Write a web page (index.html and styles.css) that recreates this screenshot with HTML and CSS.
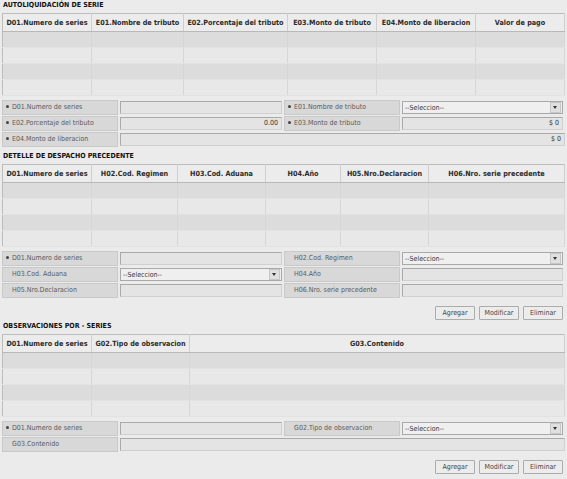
FILE: index.html
```html
<!DOCTYPE html>
<html lang="es">
<head>
  <meta charset="UTF-8">
  <title>Autoliquidación de serie</title>
  <link rel="stylesheet" href="styles.css">
</head>
<body>

  <!-- AUTOLIQUIDACION -->
  <div class="section-title">AUTOLIQUIDACIÓN DE SERIE</div>
  <table class="grid">
    <colgroup>
      <col style="width:89px"><col style="width:92px"><col style="width:104px">
      <col style="width:89px"><col style="width:99px"><col>
    </colgroup>
    <thead>
      <tr>
        <th>D01.Numero de series</th>
        <th>E01.Nombre de tributo</th>
        <th>E02.Porcentaje del tributo</th>
        <th>E03.Monto de tributo</th>
        <th>E04.Monto de liberacion</th>
        <th>Valor de pago</th>
      </tr>
    </thead>
    <tbody>
      <tr><td></td><td></td><td></td><td></td><td></td><td></td></tr>
      <tr><td></td><td></td><td></td><td></td><td></td><td></td></tr>
      <tr><td></td><td></td><td></td><td></td><td></td><td></td></tr>
      <tr><td></td><td></td><td></td><td></td><td></td><td></td></tr>
    </tbody>
  </table>

  <div class="form">
    <div class="lbl req">D01.Numero de series</div>
    <div class="fld"><div class="inp"></div></div>
    <div class="lbl req">E01.Nombre de tributo</div>
    <div class="fld"><div class="sel"><span>--Seleccion--</span><i class="arrow"></i></div></div>

    <div class="lbl req">E02.Porcentaje del tributo</div>
    <div class="fld"><div class="inp num">0.00</div></div>
    <div class="lbl req">E03.Monto de tributo</div>
    <div class="fld"><div class="inp num">$ 0</div></div>

    <div class="lbl req">E04.Monto de liberacion</div>
    <div class="fld wide"><div class="inp num">$ 0</div></div>
  </div>

  <!-- DESPACHO PRECEDENTE -->
  <div class="section-title">DETELLE DE DESPACHO PRECEDENTE</div>
  <table class="grid">
    <colgroup>
      <col style="width:89px"><col style="width:86px"><col style="width:88px">
      <col style="width:75px"><col style="width:88px"><col>
    </colgroup>
    <thead>
      <tr>
        <th>D01.Numero de series</th>
        <th>H02.Cod. Regimen</th>
        <th>H03.Cod. Aduana</th>
        <th>H04.Año</th>
        <th>H05.Nro.Declaracion</th>
        <th>H06.Nro. serie precedente</th>
      </tr>
    </thead>
    <tbody>
      <tr><td></td><td></td><td></td><td></td><td></td><td></td></tr>
      <tr><td></td><td></td><td></td><td></td><td></td><td></td></tr>
      <tr><td></td><td></td><td></td><td></td><td></td><td></td></tr>
      <tr><td></td><td></td><td></td><td></td><td></td><td></td></tr>
    </tbody>
  </table>

  <div class="form">
    <div class="lbl req">D01.Numero de series</div>
    <div class="fld"><div class="inp"></div></div>
    <div class="lbl">H02.Cod. Regimen</div>
    <div class="fld"><div class="sel"><span>--Seleccion--</span><i class="arrow"></i></div></div>

    <div class="lbl">H03.Cod. Aduana</div>
    <div class="fld"><div class="sel"><span>--Seleccion--</span><i class="arrow"></i></div></div>
    <div class="lbl">H04.Año</div>
    <div class="fld"><div class="inp"></div></div>

    <div class="lbl">H05.Nro.Declaracion</div>
    <div class="fld"><div class="inp"></div></div>
    <div class="lbl">H06.Nro. serie precedente</div>
    <div class="fld"><div class="inp"></div></div>
  </div>

  <div class="actions">
    <button class="btn">Agregar</button>
    <button class="btn">Modificar</button>
    <button class="btn">Eliminar</button>
  </div>

  <!-- OBSERVACIONES -->
  <div class="section-title">OBSERVACIONES POR - SERIES</div>
  <table class="grid">
    <colgroup>
      <col style="width:89px"><col style="width:98px"><col>
    </colgroup>
    <thead>
      <tr>
        <th>D01.Numero de series</th>
        <th>G02.Tipo de observacion</th>
        <th>G03.Contenido</th>
      </tr>
    </thead>
    <tbody>
      <tr><td></td><td></td><td></td></tr>
      <tr><td></td><td></td><td></td></tr>
      <tr><td></td><td></td><td></td></tr>
      <tr><td></td><td></td><td></td></tr>
    </tbody>
  </table>

  <div class="form">
    <div class="lbl req">D01.Numero de series</div>
    <div class="fld"><div class="inp"></div></div>
    <div class="lbl">G02.Tipo de observacion</div>
    <div class="fld"><div class="sel"><span>--Seleccion--</span><i class="arrow"></i></div></div>

    <div class="lbl">G03.Contenido</div>
    <div class="fld wide"><div class="inp"></div></div>
  </div>

  <div class="actions">
    <button class="btn">Agregar</button>
    <button class="btn">Modificar</button>
    <button class="btn">Eliminar</button>
  </div>

</body>
</html>
```

FILE: styles.css
```css
body {
  margin: 0;
  padding: 0 2px;
  background: #ebebeb;
  font-family: "DejaVu Sans Condensed", "DejaVu Sans", sans-serif;
  font-size: 7px;
  color: #333;
}

.section-title {
  height: 13px;
  line-height: 11px;
  padding-left: 1px;
  font-weight: bold;
  font-size: 7px;
  color: #111;
}

/* tablas de consulta */
table.grid {
  width: 100%;
  border-collapse: collapse;
  table-layout: fixed;
  border: 1px solid #bcbcbc;
}

table.grid th {
  height: 17px;
  padding: 0 2px;
  background: #ececec;
  border-right: 1px solid #cfcfcf;
  border-bottom: 1px solid #b8b8b8;
  font-weight: bold;
  font-size: 7.2px;
  color: #2b2b2b;
  text-align: center;
  white-space: nowrap;
  overflow: hidden;
}

table.grid td {
  height: 15px;
  padding: 0;
  border-right: 1px solid #d6d6d6;
  border-bottom: 1px solid #e2e2e2;
}

table.grid tbody tr:nth-child(odd) td {
  background: #dcdcdc;
}

table.grid tbody tr:nth-child(even) td {
  background: #e8e8e8;
}

/* formularios */
.form {
  display: grid;
  grid-template-columns: 116px 166px 116px 1fr;
  gap: 1px 0;
  margin: 4px 0;
}

.lbl {
  height: 13px;
  line-height: 13px;
  padding-left: 9px;
  background: #d8d8d8;
  border: 1px solid #c9c9c9;
  color: #5a5a5a;
  white-space: nowrap;
}

.lbl.req {
  padding-left: 3px;
}

.lbl.req::before {
  content: "";
  display: inline-block;
  width: 3px;
  height: 3px;
  border-radius: 50%;
  background: #444;
  margin-right: 3px;
  vertical-align: 1px;
}

.fld {
  padding: 0 2px;
  height: 15px;
  display: flex;
  align-items: center;
}

.fld.wide {
  grid-column: 2 / 5;
  padding-right: 0;
}

.inp {
  flex: 1;
  height: 11px;
  line-height: 11px;
  background: #e4e4e4;
  border: 1px solid #a9a9a9;
  border-right-color: #d0d0d0;
  border-bottom-color: #d0d0d0;
  padding: 0 3px;
  color: #333;
}

.inp.num {
  text-align: right;
}

.sel {
  flex: 1;
  height: 11px;
  display: flex;
  align-items: center;
  background: #efefef;
  border: 1px solid #a9a9a9;
  color: #333;
}

.sel span {
  flex: 1;
  padding-left: 2px;
}

.sel .arrow {
  width: 9px;
  height: 9px;
  margin-right: 1px;
  background: #e0e0e0;
  border: 1px solid #c6c6c6;
  position: relative;
}

.sel .arrow::after {
  content: "";
  position: absolute;
  left: 2px;
  top: 3px;
  border-left: 2px solid transparent;
  border-right: 2px solid transparent;
  border-top: 3px solid #333;
}

/* botones */
.actions {
  display: flex;
  justify-content: flex-end;
  gap: 4px;
  padding: 4px 2px 1px 0;
}

.btn {
  height: 14px;
  padding: 0 4px;
  min-width: 40px;
  background: #ececec;
  border: 1px solid #acacac;
  border-radius: 1px;
  font-family: inherit;
  font-size: 7px;
  color: #444;
}
```
